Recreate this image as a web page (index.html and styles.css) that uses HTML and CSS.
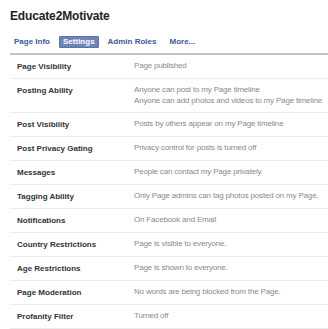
FILE: index.html
```html
<!DOCTYPE html>
<html lang="en">
<head>
    <meta charset="UTF-8">
    <title>Educate2Motivate - Settings</title>
    <link rel="stylesheet" href="styles.css">
</head>
<body>
<div class="page">
    <h1 class="page-title">Educate2Motivate</h1>
    <div class="tabs">
        <a class="tab">Page Info</a>
        <a class="tab active">Settings</a>
        <a class="tab">Admin Roles</a>
        <a class="tab">More...</a>
    </div>

    <div class="settings">
        <div class="row">
            <div class="label">Page Visibility</div>
            <div class="value">Page published</div>
        </div>
        <div class="row">
            <div class="label">Posting Ability</div>
            <div class="value">Anyone can post to my Page timeline<br>Anyone can add photos and videos to my Page timeline</div>
        </div>
        <div class="row">
            <div class="label">Post Visibility</div>
            <div class="value">Posts by others appear on my Page timeline</div>
        </div>
        <div class="row">
            <div class="label">Post Privacy Gating</div>
            <div class="value">Privacy control for posts is turned off</div>
        </div>
        <div class="row">
            <div class="label">Messages</div>
            <div class="value">People can contact my Page privately.</div>
        </div>
        <div class="row">
            <div class="label">Tagging Ability</div>
            <div class="value">Only Page admins can tag photos posted on my Page.</div>
        </div>
        <div class="row">
            <div class="label">Notifications</div>
            <div class="value">On Facebook and Email</div>
        </div>
        <div class="row">
            <div class="label">Country Restrictions</div>
            <div class="value">Page is visible to everyone.</div>
        </div>
        <div class="row">
            <div class="label">Age Restrictions</div>
            <div class="value">Page is shown to everyone.</div>
        </div>
        <div class="row">
            <div class="label">Page Moderation</div>
            <div class="value">No words are being blocked from the Page.</div>
        </div>
        <div class="row">
            <div class="label">Profanity Filter</div>
            <div class="value">Turned off</div>
        </div>
    </div>
</div>
</body>
</html>
```

FILE: styles.css
```css
/* page settings */
body {
    margin: 0;
    background: #fff;
    font-family: "Liberation Sans", Arial, sans-serif;
    color: #333;
    overflow: hidden;
}
.page {
    padding: 9px 0 0 10px;
}
.page-title {
    margin: 0;
    font-size: 12px;
    line-height: 15px;
    font-weight: bold;
    letter-spacing: -0.15px;
    color: #222;
}
.tabs {
    display: flex;
    align-items: center;
    gap: 5px;
    margin-top: 12px;
    padding: 0 0 5px 0;
    border-bottom: 2px solid #c4c4c4;
}
.tab {
    font-size: 8px;
    font-weight: bold;
    line-height: 8px;
    color: #3b5998;
    padding: 1px 3px;
    border: 1px solid transparent;
    border-radius: 1px;
}
.tab.active {
    background: #6d84b4;
    border-color: #5b74a8;
    color: #fff;
}
.row {
    display: flex;
    padding: 6px 0 6px 7px;
    border-bottom: 1px solid #ececec;
}
.label {
    width: 117px;
    flex: none;
    font-size: 8px;
    font-weight: bold;
    line-height: 11px;
    color: #333;
}
.value {
    font-size: 8px;
    line-height: 10.5px;
    letter-spacing: -0.18px;
    color: #8a8a8a;
    white-space: nowrap;
}
```
